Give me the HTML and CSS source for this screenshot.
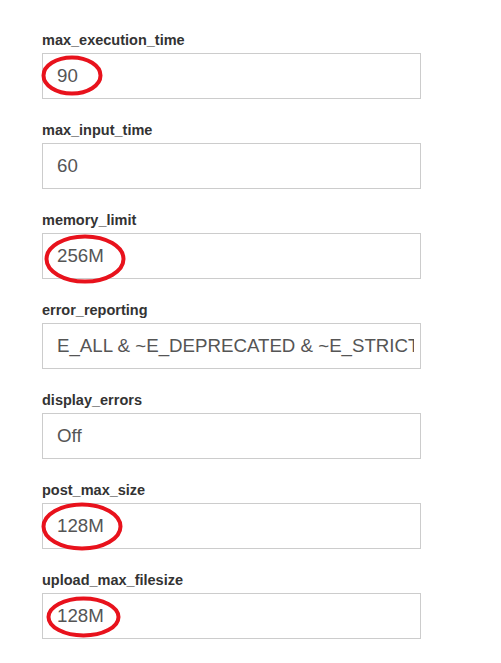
FILE: index.html
```html
<!DOCTYPE html>
<html>
<head>
<meta charset="utf-8">
<link rel="stylesheet" href="styles.css">
</head>
<body>
<div class="form">
  <div class="field"><label class="lbl">max_execution_time</label><input class="inp" readonly value="90"></div>
  <div class="field"><label class="lbl">max_input_time</label><input class="inp" readonly value="60"></div>
  <div class="field"><label class="lbl">memory_limit</label><input class="inp" readonly value="256M"></div>
  <div class="field"><label class="lbl">error_reporting</label><input class="inp" readonly value="E_ALL &amp; ~E_DEPRECATED &amp; ~E_STRICT"></div>
  <div class="field"><label class="lbl">display_errors</label><input class="inp" readonly value="Off"></div>
  <div class="field"><label class="lbl">post_max_size</label><input class="inp" readonly value="128M"></div>
  <div class="field"><label class="lbl">upload_max_filesize</label><input class="inp" readonly value="128M"></div>
</div>
<svg class="marks" width="501" height="663" viewBox="0 0 501 663">
  <ellipse cx="72" cy="75.5" rx="28.5" ry="18" />
  <ellipse cx="85" cy="259" rx="38.5" ry="22.5" />
  <ellipse cx="82" cy="526.5" rx="38.5" ry="22" />
  <ellipse cx="83.5" cy="617" rx="35" ry="18.5" />
</svg>
</body>
</html>
```
FILE: styles.css
```css
html, body {
  margin: 0;
  padding: 0;
  background: #fff;
}
body {
  position: relative;
  width: 501px;
  height: 663px;
  overflow: hidden;
  font-family: "Liberation Sans", Arial, sans-serif;
}
.form {
  padding: 31px 0 0 42px;
}
.field {
  display: flex;
  flex-direction: column;
  margin-bottom: 22px;
}
.lbl {
  font-size: 14.5px;
  font-weight: bold;
  line-height: 18px;
  color: #333;
  margin-bottom: 4px;
}
.inp {
  box-sizing: border-box;
  width: 379px;
  height: 46px;
  margin: 0;
  border: 1px solid #ccc;
  border-radius: 0;
  padding: 0 6px 0 14px;
  font-family: "Liberation Sans", Arial, sans-serif;
  font-size: 18.7px;
  color: #555;
  background: #fff;
  outline: none;
}
.marks {
  position: absolute;
  left: 0;
  top: 0;
  pointer-events: none;
}
.marks ellipse {
  fill: none;
  stroke: #e8121c;
  stroke-width: 4;
}
```
